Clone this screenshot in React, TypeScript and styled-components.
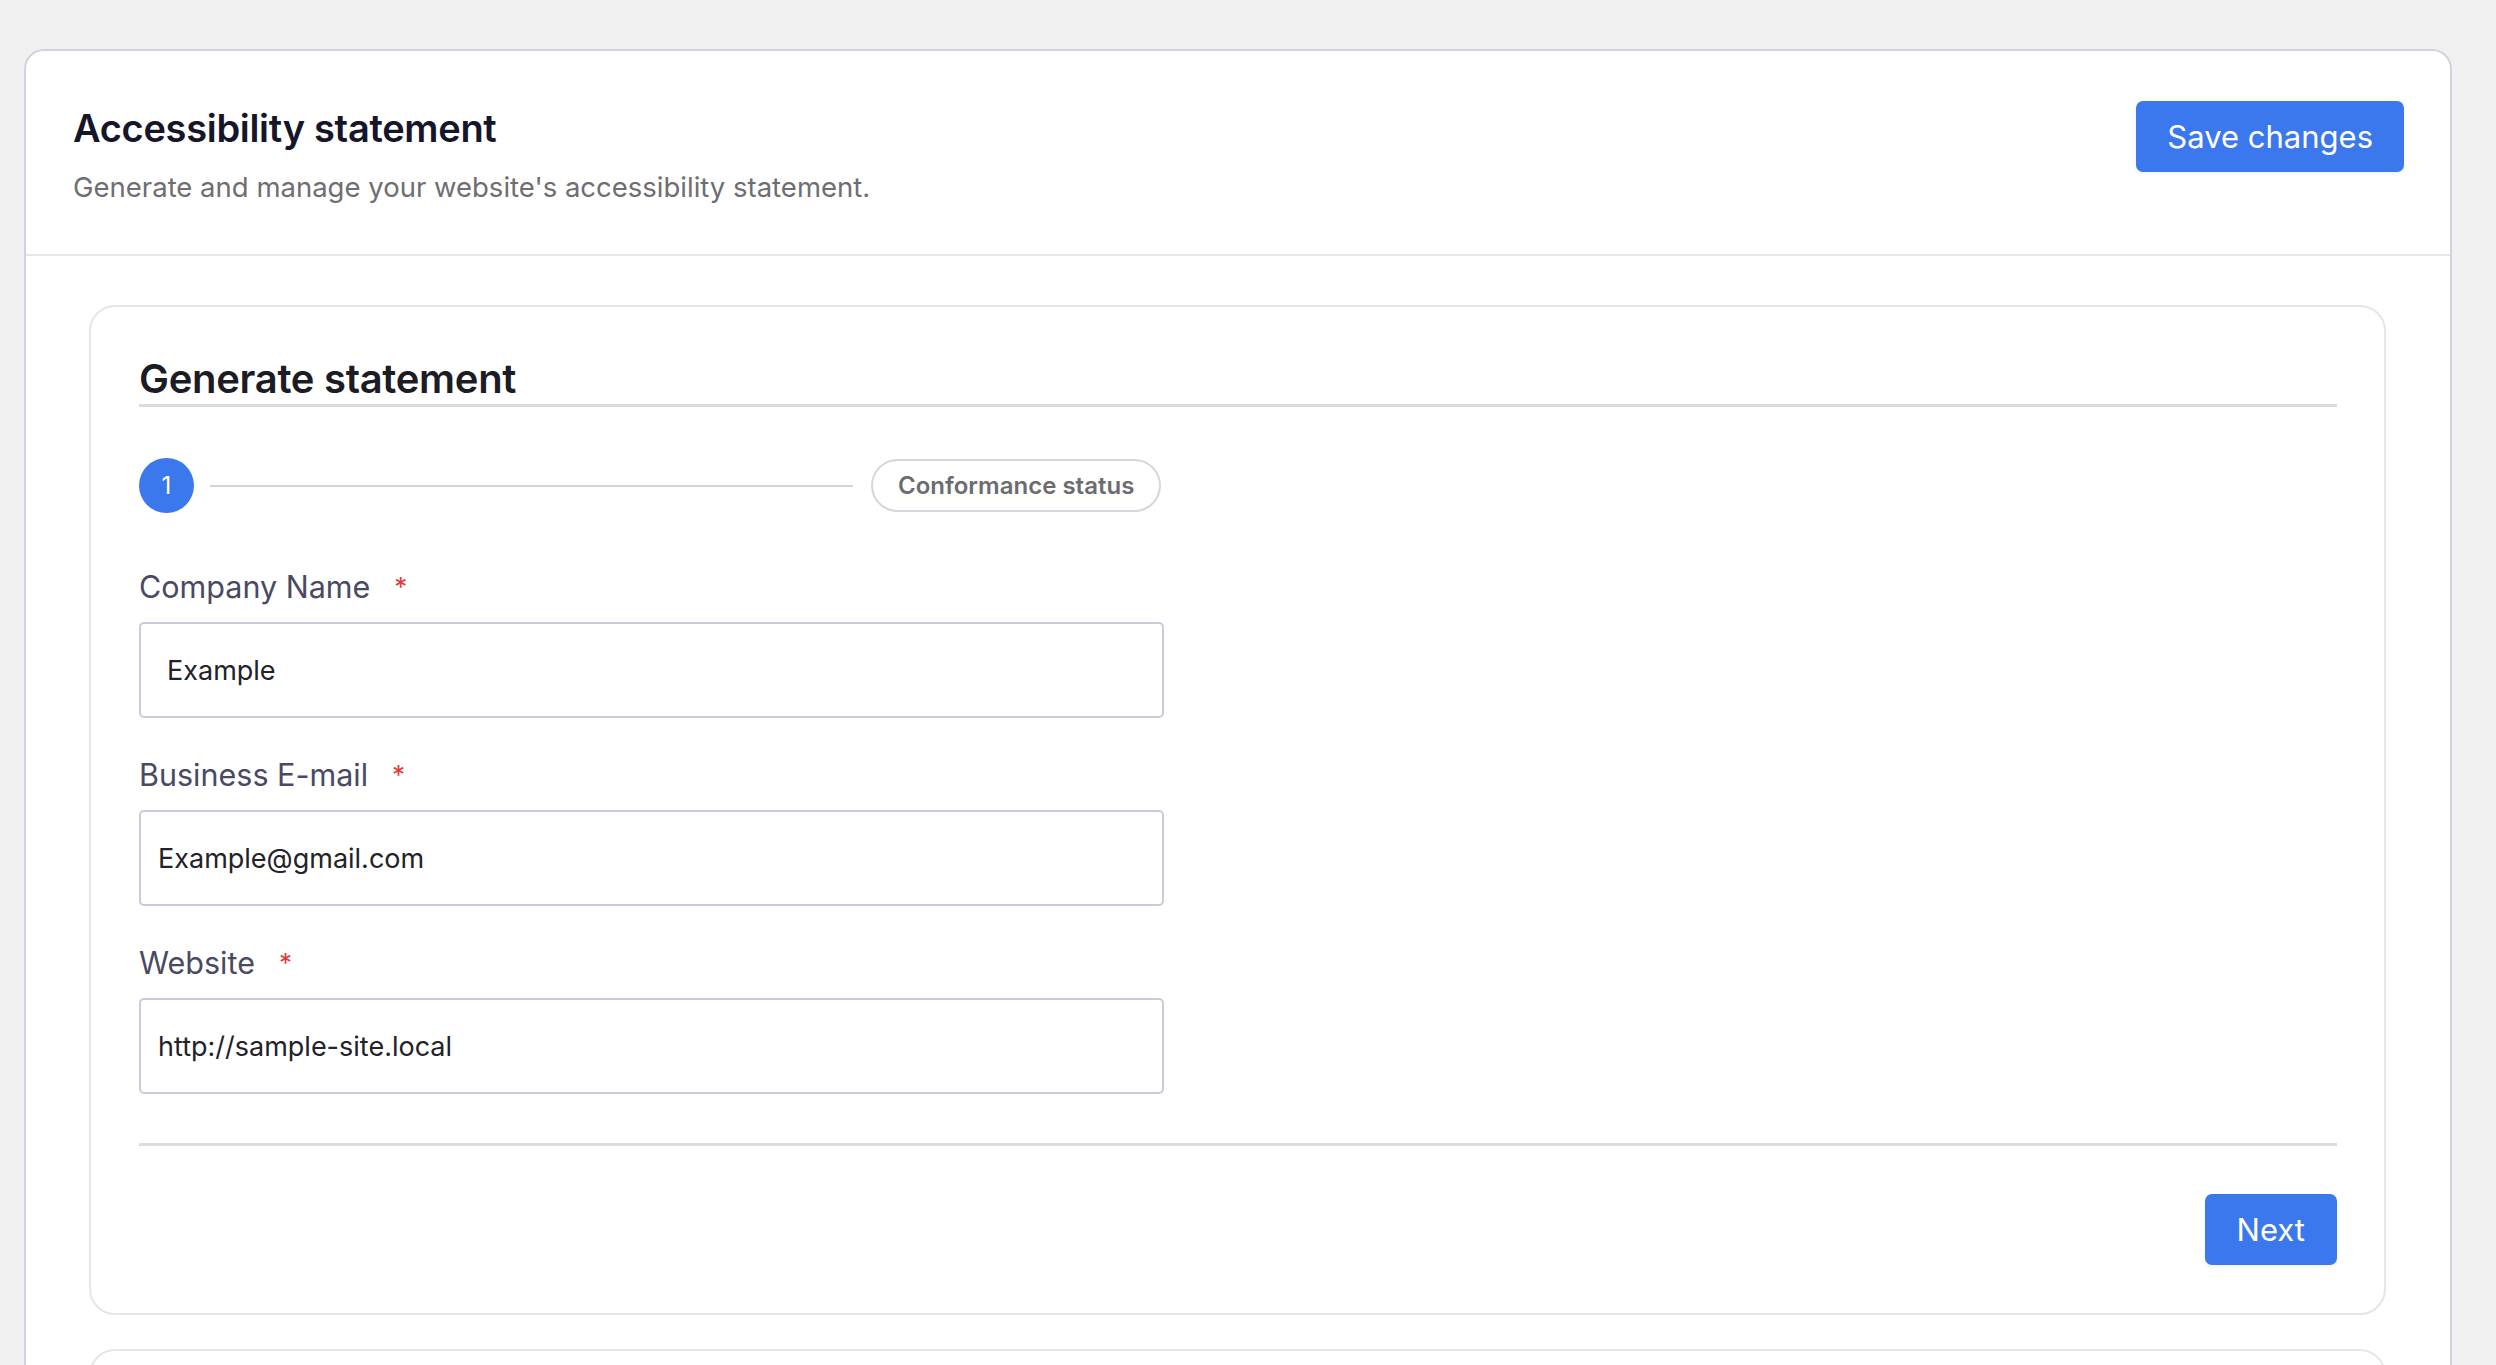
import React from "react";
import styled, { createGlobalStyle } from "styled-components";

const Global = createGlobalStyle`
  html, body { margin: 0; padding: 0; background: #f0f0f0; height: 1365px; overflow: hidden; }
  * { box-sizing: border-box; }
  body { font-family: Inter, "Noto Sans", sans-serif; }
`;

const Page = styled.div`
  padding: 49px 44px 0 24px;
`;

const Shell = styled.div`
  background: #fff;
  border: 2px solid #d2d1e0;
  border-bottom: none;
  border-radius: 20px 20px 0 0;
  min-height: 1400px;
`;

const Header = styled.header`
  display: flex;
  justify-content: space-between;
  align-items: flex-start;
  padding: 50px 46px 50px 47px;
  border-bottom: 2px solid #e6e6ec;
`;

const Title = styled.h1`
  margin: 4px 0 0;
  font-size: 38px;
  line-height: 46px;
  font-weight: 600;
  color: #16162a;
  letter-spacing: -0.3px;
`;

const Subtitle = styled.p`
  margin: 19px 0 0;
  font-size: 27.5px;
  line-height: 34px;
  color: #6e6e72;
`;

const Button = styled.button`
  background: #3b78ee;
  color: #fff;
  border: none;
  border-radius: 7px;
  height: 71px;
  padding: 0 ${(p: { $px: number }) => p.$px}px;
  font-family: Inter, "Noto Sans", sans-serif;
  font-size: 31px;
  box-shadow: 0 2px 4px rgba(0,0,0,0.06);
`;

const Body = styled.div`
  padding: 49px 64px 0 63px;
  display: flex;
  flex-direction: column;
  gap: 34px;
`;

const Card = styled.section`
  border: 2px solid #e5e5ea;
  border-radius: 26px;
  padding: 47px 47px 48px 48px;
  min-height: ${(p: { $min?: number }) => p.$min ?? 0}px;
`;

const CardTitle = styled.h2`
  margin: 0;
  font-size: 40px;
  line-height: 50px;
  font-weight: 600;
  color: #1c1c24;
  letter-spacing: -0.3px;
  border-bottom: 3px solid #dcdcdf;
`;

const Stepper = styled.div`
  display: flex;
  align-items: center;
  margin-top: 51px;
  width: 1024px;
`;

const StepDot = styled.div`
  width: 55px;
  height: 55px;
  border-radius: 50%;
  background: #3b78ee;
  color: #fff;
  display: flex;
  align-items: center;
  justify-content: center;
  font-size: 24px;
`;

const StepLine = styled.div`
  flex: 0 0 643px;
  height: 2px;
  background: #d3d5db;
  margin: 0 18px 0 16px;
`;

const StepPill = styled.div`
  height: 53px;
  padding: 0 25px;
  border: 2px solid #d6d6de;
  border-radius: 27px;
  display: flex;
  align-items: center;
  font-size: 24px;
  font-weight: 600;
  color: #6c6c70;
`;

const Field = styled.div`
  margin-top: ${(p: { $mt: number }) => p.$mt}px;
  width: 1025px;
`;

const Label = styled.label`
  display: block;
  font-size: 30.5px;
  line-height: 36px;
  color: #4a4963;
  margin-bottom: 17px;
`;

const Star = styled.span`
  color: #e23c3c;
  margin-left: 24px;
  font-size: 26px;
  vertical-align: top;
`;

const Input = styled.div`
  height: 96px;
  border: 2px solid #cbcadb;
  border-radius: 5px;
  display: flex;
  align-items: center;
  padding-left: ${(p: { $pl: number }) => p.$pl}px;
  font-size: 27px;
  color: #222228;
`;

const Divider = styled.div`
  margin-top: 49px;
  height: 3px;
  background: #dcdcdf;
`;

const Footer = styled.div`
  display: flex;
  justify-content: flex-end;
  margin-top: 48px;
`;

const fields = [
  { label: "Company Name", value: "Example", pl: 26, mt: 56 },
  { label: "Business E-mail", value: "Example@gmail.com", pl: 17, mt: 39 },
  { label: "Website", value: "http://sample-site.local", pl: 17, mt: 39 },
];

export default function App() {
  return (
    <>
      <Global />
      <Page>
        <Shell>
          <Header>
            <div>
              <Title>Accessibility statement</Title>
              <Subtitle>Generate and manage your website's accessibility statement.</Subtitle>
            </div>
            <Button $px={31}>Save changes</Button>
          </Header>
          <Body>
            <Card>
              <CardTitle>Generate statement</CardTitle>
              <Stepper>
                <StepDot>1</StepDot>
                <StepLine />
                <StepPill>Conformance status</StepPill>
              </Stepper>
              {fields.map((f) => (
                <Field key={f.label} $mt={f.mt}>
                  <Label>
                    {f.label}
                    <Star>*</Star>
                  </Label>
                  <Input $pl={f.pl}>{f.value}</Input>
                </Field>
              ))}
              <Divider />
              <Footer>
                <Button $px={32}>Next</Button>
              </Footer>
            </Card>
            <Card $min={200} />
          </Body>
        </Shell>
      </Page>
    </>
  );
}
